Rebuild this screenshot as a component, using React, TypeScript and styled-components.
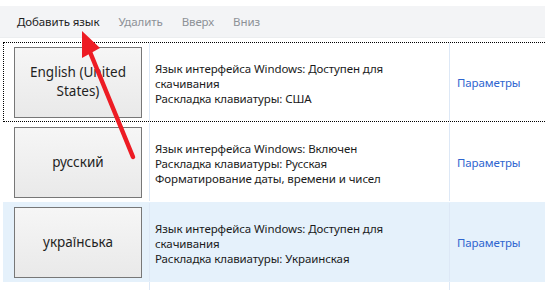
import React from "react";
import styled, { createGlobalStyle } from "styled-components";

const GlobalStyle = createGlobalStyle`
  html, body {
    margin: 0;
    padding: 0;
    background: #ffffff;
  }
  body {
    font-family: "Noto Sans", "Open Sans", sans-serif;
    overflow: hidden;
  }
`;

type Lang = {
  name: string;
  lines: string[];
  selected?: boolean;
  focused?: boolean;
};

const langs: Lang[] = [
  {
    name: "English (United States)",
    lines: [
      "Язык интерфейса Windows: Доступен для скачивания",
      "Раскладка клавиатуры: США",
    ],
    focused: true,
  },
  {
    name: "русский",
    lines: [
      "Язык интерфейса Windows: Включен",
      "Раскладка клавиатуры: Русская",
      "Форматирование даты, времени и чисел",
    ],
  },
  {
    name: "українська",
    lines: [
      "Язык интерфейса Windows: Доступен для скачивания",
      "Раскладка клавиатуры: Украинская",
    ],
    selected: true,
  },
];

const App = () => {
  return (
    <Page>
      <GlobalStyle />
      <Toolbar>
        <ToolItem $active>Добавить язык</ToolItem>
        <ToolItem>Удалить</ToolItem>
        <ToolItem>Вверх</ToolItem>
        <ToolItem>Вниз</ToolItem>
      </Toolbar>
      <List>
        {langs.map((l) => (
          <Row key={l.name} $selected={l.selected} $focused={l.focused}>
            <NameCell>
              <LangButton>{l.name}</LangButton>
            </NameCell>
            <InfoCell>
              {l.lines.map((t) => (
                <div key={t}>{t}</div>
              ))}
            </InfoCell>
            <LinkCell>
              <Link>Параметры</Link>
            </LinkCell>
          </Row>
        ))}
        <Filler>
          <NameCell />
          <InfoCell />
          <LinkCell />
        </Filler>
      </List>
      <Arrow width="545" height="290" viewBox="0 0 545 290">
        <line
          x1="90"
          y1="52"
          x2="133"
          y2="157"
          stroke="#ed1c24"
          strokeWidth="4.5"
          strokeLinecap="round"
        />
        <polygon points="82,31 82,58 100,48" fill="#ed1c24" />
      </Arrow>
    </Page>
  );
};

export default App;

const Page = styled.div`
  position: relative;
  width: 545px;
  height: 290px;
  overflow: hidden;
  background: #fff;
`;

const Toolbar = styled.div`
  margin-top: 6px;
  height: 31px;
  background: #f3f4f6;
  border-bottom: 1px solid #eceef0;
  display: flex;
  align-items: center;
  padding-left: 17px;
  gap: 19px;
  font-size: 11.5px;
  letter-spacing: -0.1px;
`;

const ToolItem = styled.span<{ $active?: boolean }>`
  color: ${(p) => (p.$active ? "#1e1e1e" : "#8d9197")};
`;

const List = styled.div`
  margin-top: 4px;
  margin-left: 3px;
  display: flex;
  flex-direction: column;
`;

const Row = styled.div<{ $selected?: boolean; $focused?: boolean }>`
  display: grid;
  grid-template-columns: 146px 300px 1fr;
  height: 80px;
  box-sizing: border-box;
  border: 1px ${(p) => (p.$focused ? "dotted #000" : "solid transparent")};
  border-right: none;
  background: ${(p) => (p.$selected ? "#e5f1fb" : "transparent")};
`;

const Filler = styled.div`
  display: grid;
  grid-template-columns: 146px 300px 1fr;
  height: 20px;
  border-left: 1px solid transparent;
`;

const NameCell = styled.div`
  display: flex;
  align-items: center;
  padding-left: 10px;
  border-right: 1px solid #dde8f6;
`;

const LangButton = styled.div`
  width: 128px;
  height: 71px;
  box-sizing: border-box;
  border: 1px solid #777;
  background: linear-gradient(#f6f6f6, #e9e9e9);
  display: flex;
  align-items: center;
  justify-content: center;
  text-align: center;
  font-size: 13.5px;
  line-height: 19px;
  color: #1f1f1f;
  padding: 0 14px;
`;

const InfoCell = styled.div`
  display: flex;
  flex-direction: column;
  justify-content: center;
  padding-left: 5px;
  padding-right: 60px;
  padding-top: 3px;
  font-size: 11.5px;
  letter-spacing: -0.1px;
  line-height: 15px;
  color: #1a1a1a;
  border-right: 1px solid #dde8f6;
`;

const LinkCell = styled.div`
  display: flex;
  align-items: center;
  padding-left: 7px;
`;

const Link = styled.span`
  font-size: 11.5px;
  letter-spacing: -0.1px;
  color: #2f65cf;
`;

const Arrow = styled.svg`
  position: absolute;
  left: 0;
  top: 0;
  pointer-events: none;
`;
